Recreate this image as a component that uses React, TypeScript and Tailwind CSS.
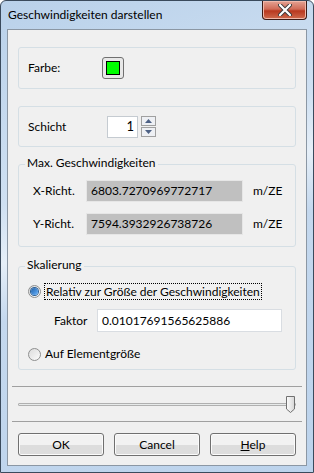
import React from 'react';

const font = { fontFamily: 'Lato, "Open Sans", "Noto Sans", sans-serif' };

function Group({ title, className, children }: { title?: string; className?: string; children: React.ReactNode }) {
  return (
    <div className={`relative mx-[10px] rounded-[3px] border border-[#d5dfe5] ${className ?? ''}`}>
      {title && (
        <span className="absolute -top-[10px] left-[6px] bg-[#f0f0f0] px-[2px] text-[12px] leading-[16px] text-black">
          {title}
        </span>
      )}
      {children}
    </div>
  );
}

function Radio({ checked }: { checked?: boolean }) {
  return (
    <span className="flex h-[13px] w-[13px] items-center justify-center rounded-full border border-[#8e8f8f] bg-gradient-to-br from-[#dcdcdc] to-[#fbfbfb]">
      {checked && <span className="h-[7px] w-[7px] rounded-full bg-gradient-to-br from-[#1d5fa8] to-[#6ab5ff] shadow-[0_0_0_1px_#2b5e94]" />}
    </span>
  );
}

function Button({ children }: { children: React.ReactNode }) {
  return (
    <button className="h-[23px] w-[86px] rounded-[3px] border border-[#707070] bg-gradient-to-b from-[#f2f2f2] from-50% to-[#dddddd] to-50% text-[12px] text-black shadow-[inset_0_0_0_1px_#fbfbfb]">
      {children}
    </button>
  );
}

export default function App() {
  return (
    <div style={font} className="h-[473px] w-[314px] overflow-hidden">
      <div className="flex h-full w-full flex-col rounded-t-[6px] border border-[#3a4a5c] bg-[linear-gradient(160deg,#b9d1ea_0%,#cfe0f2_35%,#e6eff8_45%,#c4d8ee_55%,#bcd3ec_100%)]">
        {/* title bar */}
        <div className="flex h-[28px] shrink-0 items-start">
          <span className="pl-[7px] pt-[6px] text-[12px] leading-[16px] text-black">Geschwindigkeiten darstellen</span>
          <div className="ml-auto mr-[6px] flex h-[19px] w-[45px] items-center justify-center rounded-b-[4px] border border-t-0 border-[#3c1b16] bg-[linear-gradient(#e4a394,#d06b57_45%,#b8381f_55%,#cf6b4e)] shadow-[inset_0_0_0_1px_#f0b9ab]">
            <svg width="14" height="12" viewBox="0 0 14 12">
              <path d="M2 1 L12 11 M12 1 L2 11" stroke="#3c3c3c" strokeWidth="4" strokeLinecap="round" />
              <path d="M2 1 L12 11 M12 1 L2 11" stroke="#ffffff" strokeWidth="2.2" strokeLinecap="round" />
            </svg>
          </div>
        </div>

        {/* client area */}
        <div className="mx-[6px] mb-[6px] flex flex-1 flex-col border border-[#8b97a4] bg-[#f0f0f0] text-[12px] text-black">
          <Group className="mt-[17px] flex h-[42px] items-center">
            <span className="ml-[9px] w-[74px]">Farbe:</span>
            <span className="flex h-[22px] w-[22px] items-center justify-center rounded-[3px] border border-[#707070] bg-[#e8e8e8]">
              <span className="h-[14px] w-[14px] border border-black bg-[#00ff00]" />
            </span>
          </Group>

          <Group className="mt-[17px] flex h-[41px] items-center">
            <span className="ml-[9px] w-[79px]">Schicht</span>
            <span className="flex h-[22px] w-[31px] items-center justify-end border border-[#c5cbd1] bg-white pr-[3px] text-[13px]">1</span>
            <div className="ml-[3px] flex flex-col gap-[1px]">
              <span className="flex h-[10px] w-[15px] items-center justify-center border border-[#a0a0a0] bg-[#eef0f4]">
                <svg width="7" height="4" viewBox="0 0 7 4"><path d="M0 4 L3.5 0 L7 4Z" fill="#4d6185" /></svg>
              </span>
              <span className="flex h-[10px] w-[15px] items-center justify-center border border-[#a0a0a0] bg-[#eef0f4]">
                <svg width="7" height="4" viewBox="0 0 7 4"><path d="M0 0 L3.5 4 L7 0Z" fill="#4d6185" /></svg>
              </span>
            </div>
          </Group>

          <Group title="Max. Geschwindigkeiten" className="mt-[17px] flex h-[83px] flex-col gap-[11px] pt-[15px]">
            <div className="flex items-center">
              <span className="ml-[14px] w-[53px]">X-Richt.</span>
              <span className="flex h-[22px] w-[157px] items-center border border-[#e6e6e6] bg-[#c0c0c0] px-[4px]">6803.7270969772717</span>
              <span className="ml-[10px]">m/ZE</span>
            </div>
            <div className="flex items-center">
              <span className="ml-[14px] w-[53px]">Y-Richt.</span>
              <span className="flex h-[22px] w-[157px] items-center border border-[#e6e6e6] bg-[#c0c0c0] px-[4px]">7594.3932926738726</span>
              <span className="ml-[10px]">m/ZE</span>
            </div>
          </Group>

          <Group title="Skalierung" className="mt-[19px] flex h-[104px] flex-col pt-[16px]">
            <div className="ml-[9px] flex items-center gap-[3px]">
              <Radio checked />
              <span className="border border-dotted border-black px-[1px] leading-[15px]">Relativ zur Größe der Geschwindigkeiten</span>
            </div>
            <div className="mt-[9px] flex items-center">
              <span className="ml-[35px] w-[43px]">Faktor</span>
              <span className="flex h-[23px] w-[185px] items-center border border-[#d9dde2] bg-white px-[4px]">0.01017691565625886</span>
            </div>
            <div className="ml-[9px] mt-[13px] flex items-center gap-[4px]">
              <Radio />
              <span>Auf Elementgröße</span>
            </div>
          </Group>

          <div className="mx-[4px] mt-[16px] h-[1px] bg-[#a0a0a0]" />
          <div className="relative mx-[10px] flex h-[34px] items-center">
            <div className="h-[3px] flex-1 rounded-[1px] border border-[#b0b0b0] bg-[#e7eaea]" />
            <svg className="absolute right-0 top-[8px]" width="11" height="19" viewBox="0 0 11 19">
              <defs>
                <linearGradient id="th" x1="0" x2="1">
                  <stop offset="0" stopColor="#fdfdfd" />
                  <stop offset="1" stopColor="#d6d6d6" />
                </linearGradient>
              </defs>
              <path d="M1.5 1.5 H9.5 V14 L5.5 17.5 L1.5 14 Z" fill="url(#th)" stroke="#707070" strokeLinejoin="round" />
            </svg>
          </div>
          <div className="mx-[4px] h-[1px] bg-[#a0a0a0]" />

          <div className="mt-[11px] flex gap-[10px] px-[10px]">
            <Button>OK</Button>
            <Button>Cancel</Button>
            <Button>
              <span className="underline">H</span>elp
            </Button>
          </div>
        </div>
      </div>
    </div>
  );
}
